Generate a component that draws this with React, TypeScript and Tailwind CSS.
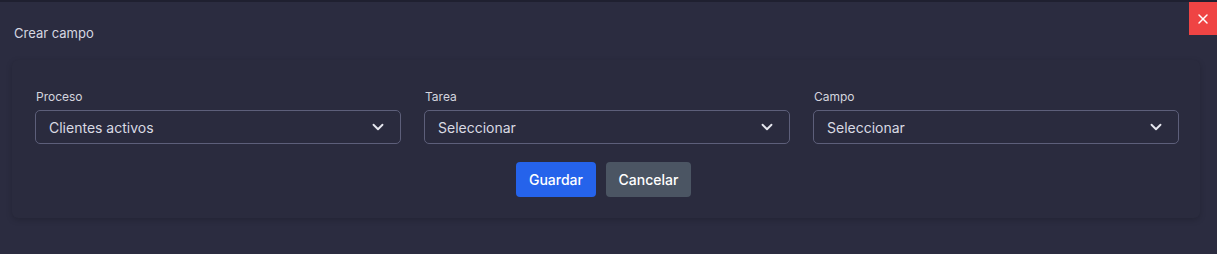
import { ChevronDown, X } from "lucide-react";

const fields = [
  { label: "Proceso", value: "Clientes activos" },
  { label: "Tarea", value: "Seleccionar" },
  { label: "Campo", value: "Seleccionar" },
];

function SelectField({ label, value }: { label: string; value: string }) {
  return (
    <div className="flex flex-col">
      <label className="text-[12px] leading-4 text-[#d4d5de] mb-[5px] pl-px">{label}</label>
      <div className="flex h-[34px] items-center justify-between rounded-[5px] border border-[#5d5f7a] px-[13px]">
        <span className="text-[14px] text-[#d9dae3]">{value}</span>
        <ChevronDown className="w-[18px] h-[18px] text-[#e5e6ee]" strokeWidth={2.5} />
      </div>
    </div>
  );
}

export default function App() {
  return (
    <div
      className="w-[1217px] h-[254px] bg-[#2b2c40] border-t-2 border-[#1f2030]"
      style={{ fontFamily: "Inter, 'Noto Sans', sans-serif" }}
    >
      <div className="flex h-[58px] items-start justify-between">
        <h2 className="pl-[14px] pt-[23px] text-[13px] leading-4 text-[#d6d7e0]">Crear campo</h2>
        <button className="flex h-[33px] w-[28px] items-center justify-center bg-[#ef4444] text-white">
          <X className="w-[16px] h-[16px]" strokeWidth={2.25} />
        </button>
      </div>
      <div className="mx-[12px] w-[1188px] rounded-md bg-[#2a2b3e] shadow-[0_2px_6px_rgba(0,0,0,0.18)] pt-[29px] pb-[21px] pl-[23px] pr-[21px]">
        <div className="grid grid-cols-3 gap-[23px]">
          {fields.map((f) => (
            <SelectField key={f.label} label={f.label} value={f.value} />
          ))}
        </div>
        <div className="mt-[18px] flex justify-center gap-[10px] pr-[7px]">
          <button className="h-[35px] w-[80px] rounded-[4px] bg-[#2563eb] text-[14px] font-medium text-white">
            Guardar
          </button>
          <button className="h-[35px] w-[85px] rounded-[4px] bg-[#4b5563] text-[14px] font-medium text-white">
            Cancelar
          </button>
        </div>
      </div>
    </div>
  );
}
